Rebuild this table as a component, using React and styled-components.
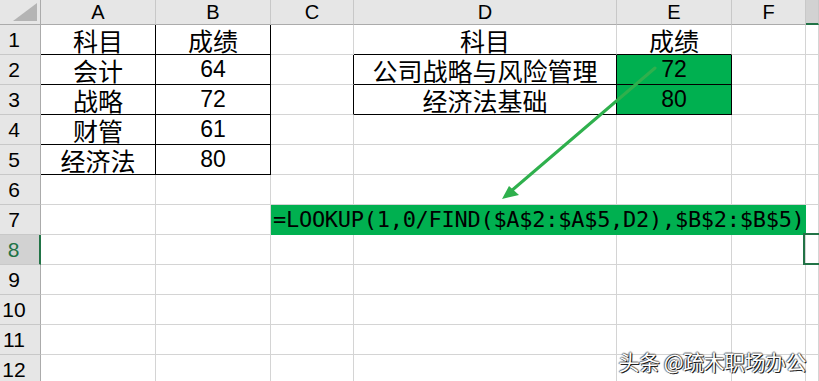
import React from "react";
import styled, { createGlobalStyle, css } from "styled-components";

const GlobalStyle = createGlobalStyle`
  html, body { margin: 0; padding: 0; background: #fff; }
  body { font-family: "Liberation Sans", "Noto Sans CJK SC", sans-serif; }
`;

const GRID = "#d4d4d4";
const HEAD_BG = "#e6e6e6";
const HEAD_LINE = "#ababab";
const HEAD_SEP = "#c8c8c8";
const XL_GREEN = "#00b050";
const SEL_GREEN = "#217346";

const COLS = ["A", "B", "C", "D", "E", "F", "G"];
const ROWS = [1, 2, 3, 4, 5, 6, 7, 8, 9, 10, 11, 12];

const Sheet = styled.div`
  position: relative;
  width: 819px;
  height: 381px;
  overflow: hidden;
  background: #fff;
`;

const Grid = styled.div`
  display: grid;
  grid-template-columns: 41px 115px 115px 83px 263px 115px 74px 1fr;
  grid-template-rows: 25px repeat(12, 30px);
`;

const Corner = styled.div`
  position: relative;
  box-sizing: border-box;
  background: ${HEAD_BG};
  border-right: 1px solid ${HEAD_LINE};
  border-bottom: 1px solid ${HEAD_LINE};
  &::after {
    content: "";
    position: absolute;
    left: 13px;
    top: 3px;
    width: 24px;
    height: 18px;
    background: #b4b4b4;
    clip-path: polygon(100% 0, 100% 100%, 0 100%);
  }
`;

const ColHead = styled.div`
  box-sizing: border-box;
  display: flex;
  align-items: center;
  justify-content: center;
  font-size: 20px;
  color: #000;
  background: ${(p) => (p.$active ? "#d2d2d2" : HEAD_BG)};
  border-right: 1px solid ${HEAD_SEP};
  border-bottom: ${(p) =>
    p.$active ? `2px solid ${SEL_GREEN}` : `1px solid ${HEAD_LINE}`};
`;

const RowHead = styled.div`
  box-sizing: border-box;
  display: flex;
  align-items: center;
  justify-content: center;
  padding-right: 12px;
  font-size: 21px;
  color: ${(p) => (p.$active ? SEL_GREEN : "#000")};
  background: ${(p) => (p.$active ? "#d2d2d2" : HEAD_BG)};
  border-bottom: 1px solid ${HEAD_SEP};
  border-right: ${(p) =>
    p.$active ? `2px solid ${SEL_GREEN}` : `1px solid ${HEAD_LINE}`};
`;

const Cell = styled.div`
  position: relative;
  box-sizing: border-box;
  display: flex;
  align-items: center;
  justify-content: center;
  white-space: nowrap;
  font-size: ${(p) => (p.$cjk ? "25px" : "23px")};
  color: #000;
  background: ${(p) => (p.$fill ? XL_GREEN : "#fff")};
  border-right: 1px solid ${(p) => (p.$right ? "#000" : GRID)};
  border-bottom: 1px solid ${(p) => (p.$bottom ? "#000" : GRID)};
  ${(p) =>
    p.$selected &&
    css`
      &::after {
        content: "";
        position: absolute;
        left: -3px;
        top: -2px;
        right: -4px;
        bottom: -1px;
        border: 2px solid ${SEL_GREEN};
      }
    `}
`;

const FormulaCell = styled.div`
  grid-column: span 4;
  box-sizing: border-box;
  display: flex;
  align-items: center;
  margin-left: -1px;
  padding-left: 3px;
  background: ${XL_GREEN};
  border-right: 1px solid ${XL_GREEN};
  border-bottom: 1px solid ${XL_GREEN};
  font-family: "DejaVu Sans Mono", "Liberation Mono", monospace;
  font-size: 22px;
  letter-spacing: -0.28px;
  color: #000;
  white-space: nowrap;
`;

const Overlay = styled.svg`
  position: absolute;
  left: 0;
  top: 0;
  pointer-events: none;
`;

const Watermark = styled.div`
  position: absolute;
  right: 13px;
  top: 346px;
  font-family: "Noto Sans CJK SC", sans-serif;
  font-size: 21px;
  color: #fff;
  letter-spacing: -0.5px;
  text-shadow: 1px 1px 0 rgba(0, 0, 0, 0.85), -1px 0 1px rgba(0, 0, 0, 0.55),
    0 -1px 1px rgba(0, 0, 0, 0.45), 1px 0 1px rgba(0, 0, 0, 0.5);
`;

// cell contents keyed by address
const cells = {
  A1: { text: "科目", cjk: true },
  B1: { text: "成绩", cjk: true },
  A2: { text: "会计", cjk: true },
  B2: { text: "64" },
  A3: { text: "战略", cjk: true },
  B3: { text: "72" },
  A4: { text: "财管", cjk: true },
  B4: { text: "61" },
  A5: { text: "经济法", cjk: true },
  B5: { text: "80" },
  D1: { text: "科目", cjk: true },
  E1: { text: "成绩", cjk: true },
  D2: { text: "公司战略与风险管理", cjk: true },
  E2: { text: "72", fill: true },
  D3: { text: "经济法基础", cjk: true },
  E3: { text: "80", fill: true },
};

// black-bordered ranges: A1:B5 and D2:E3
const inRange = (c, r, c0, c1, r0, r1) =>
  COLS.indexOf(c) >= COLS.indexOf(c0) &&
  COLS.indexOf(c) <= COLS.indexOf(c1) &&
  r >= r0 &&
  r <= r1;

const blackRight = (c, r) =>
  inRange(c, r, "A", "B", 1, 5) ||
  inRange(c, r, "D", "E", 2, 3) ||
  (c === "C" && r >= 2 && r <= 3);

const blackBottom = (c, r) =>
  inRange(c, r, "A", "B", 1, 5) || inRange(c, r, "D", "E", 1, 3);

const FORMULA = "=LOOKUP(1,0/FIND($A$2:$A$5,D2),$B$2:$B$5)";

function Row({ r }) {
  const out = [
    <RowHead key="h" $active={r === 8}>
      {r}
    </RowHead>,
  ];
  if (r === 7) {
    out.push(<Cell key="A" />, <Cell key="B" />);
    out.push(<FormulaCell key="f">{FORMULA}</FormulaCell>);
    out.push(<Cell key="G" />);
    return out;
  }
  COLS.forEach((c) => {
    const d = cells[`${c}${r}`] || {};
    out.push(
      <Cell
        key={c}
        $cjk={d.cjk}
        $fill={d.fill}
        $right={blackRight(c, r)}
        $bottom={blackBottom(c, r)}
        $selected={c === "G" && r === 8}
      >
        {d.text}
      </Cell>
    );
  });
  return out;
}

export default function App() {
  return (
    <>
      <GlobalStyle />
      <Sheet>
        <Grid>
          <Corner />
          {COLS.map((c) => (
            <ColHead key={c} $active={c === "G"}>
              {c === "G" ? "" : c}
            </ColHead>
          ))}
          {ROWS.map((r) => (
            <Row key={r} r={r} />
          ))}
        </Grid>
        <Overlay width="819" height="381" viewBox="0 0 819 381">
          <line
            x1="655"
            y1="68"
            x2="510"
            y2="192"
            stroke="#2fb04d"
            strokeWidth="3"
            strokeLinecap="round"
          />
          <polygon points="502,199 519,195 509,186" fill="#2fb04d" />
        </Overlay>
        <Watermark>头条 @疏木职场办公</Watermark>
      </Sheet>
    </>
  );
}
